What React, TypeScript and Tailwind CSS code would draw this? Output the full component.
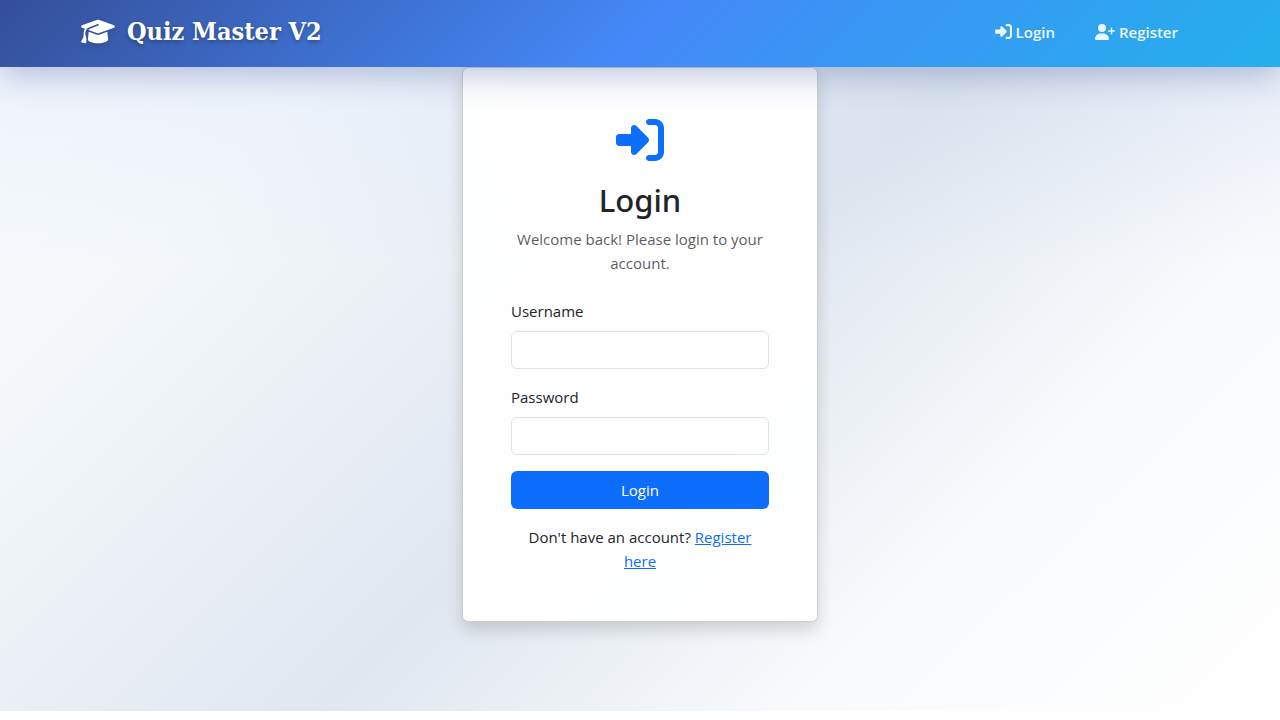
import { FaGraduationCap, FaRightToBracket, FaUserPlus } from "react-icons/fa6";

const fieldClass =
  "block h-[38px] w-full rounded-md border border-[#dee2e6] bg-white px-3 text-base text-[#212529] outline-none focus:border-[#86b7fe]";

function Navbar() {
  return (
    <header className="relative z-10 bg-[linear-gradient(135deg,#354f99_0%,#4489f8_50%,#24b0ec_100%)] shadow-[0_8px_32px_rgba(53,79,153,0.32)]">
      <nav className="mx-auto flex h-[67px] max-w-[1144px] items-center justify-between px-3 pb-1">
        <a href="#home" className="flex items-center gap-3 pl-px font-['DejaVu_Serif_Condensed','DejaVu_Serif',serif] text-[25px] font-bold text-white [text-shadow:0_2px_4px_rgba(0,0,0,0.3)]">
          <FaGraduationCap className="h-[27px] w-[34px] drop-shadow-md" />
          <span>Quiz Master V2</span>
        </a>
        <div className="flex items-center gap-10 pr-[22px] text-[15px] font-semibold text-white/90">
          <a href="#login" className="flex items-center gap-1">
            <FaRightToBracket className="size-[17px]" />
            Login
          </a>
          <a href="#register" className="flex items-center gap-1">
            <FaUserPlus className="h-4 w-5" />
            Register
          </a>
        </div>
      </nav>
    </header>
  );
}

export default function App() {
  return (
    <div className="min-h-screen bg-white pb-[9px] font-['Open_Sans','Noto_Sans',sans-serif] text-[15px] leading-6 text-[#212529]">
      <div className="min-h-[711px] bg-[linear-gradient(180deg,rgba(68,110,220,0.05)_67px,transparent_267px),linear-gradient(135deg,#f8fbfd_0%,#f4f8fb_20%,#e0e7ef_52%,#f8fafc_75%,#ffffff_100%)]">
        <Navbar />
        <main className="mx-auto w-full max-w-[356px]">
          <section className="rounded-md border border-black/20 bg-white/95 p-12 shadow-[0_8px_16px_rgba(0,0,0,0.15)]">
            <div className="mb-6 text-center">
              <FaRightToBracket className="mx-auto mb-4 size-12 text-[#0d6efd]" />
              <h1 className="mb-1.5 font-['Noto_Sans',sans-serif] text-[31px] leading-[41px] font-medium">Login</h1>
              <p className="text-[#212529]/75">Welcome back! Please login to your account.</p>
            </div>
            <form onSubmit={(event) => event.preventDefault()}>
              <div className="mb-4">
                <label htmlFor="username" className="mb-2 block">Username</label>
                <input id="username" type="text" className={fieldClass} />
              </div>
              <div className="mb-4">
                <label htmlFor="password" className="mb-2 block">Password</label>
                <input id="password" type="password" className={fieldClass} />
              </div>
              <button type="submit" className="h-[38px] w-full rounded-md bg-[#0d6efd] text-white">Login</button>
            </form>
            <p className="mt-4 text-center">
              Don't have an account?{" "}
              <a href="#register" className="text-[#0d6efd] underline">Register here</a>
            </p>
          </section>
        </main>
      </div>
    </div>
  );
}
